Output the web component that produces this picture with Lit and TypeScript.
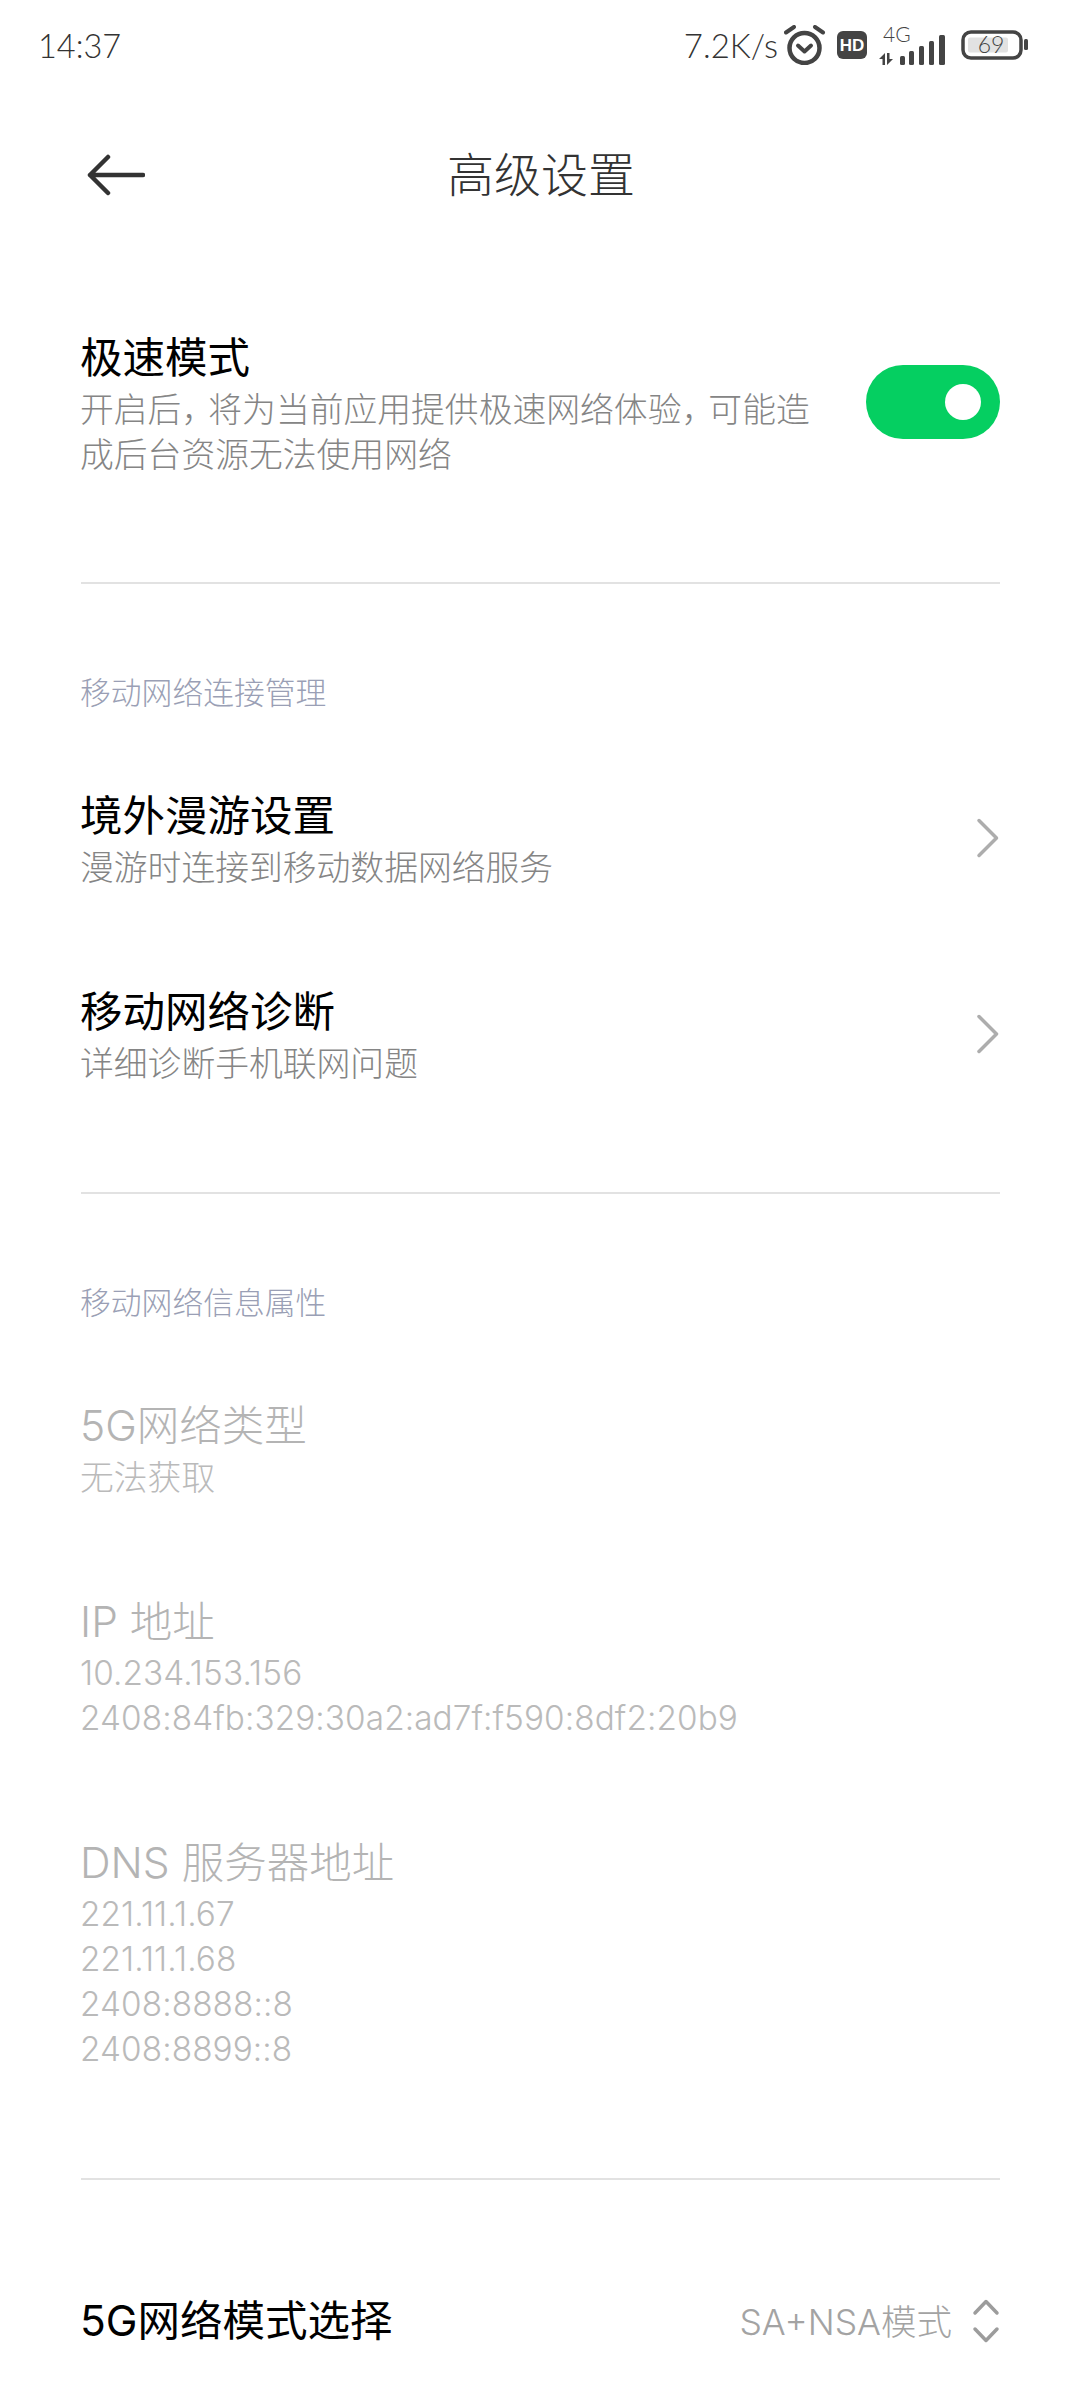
import { LitElement, html, css } from "lit";
import { customElement } from "lit/decorators.js";

const chevron = html`<svg class="chev" width="24" height="40" viewBox="0 0 24 40"><path d="M3 2.500L20.500 20L3 37.500" fill="none" stroke="#adadad" stroke-width="3.500" stroke-linecap="round" stroke-linejoin="round"/></svg>`;

@customElement("app-root")
export class AppRoot extends LitElement {
  static styles = css`
    :host {
      display: block;
      width: 1080px;
      height: 2400px;
      background: #fff;
      overflow: hidden;
      font-family: "Inter", "Noto Sans CJK SC", sans-serif;
      font-weight: 300;
      color: #000;
    }
    .status {
      height: 90px;
      display: flex;
      align-items: center;
      padding: 0 51px 0 38px;
      color: #333;
      font-size: 33px;
      font-family: "Lato", sans-serif;
    }
    .time { margin-right: auto; font-size: 32.500px; }
    .speed { margin-right: 6px; }
    .icons { display: flex; align-items: center; }
    .icons svg { display: block; }
    .gap-hd { margin-left: 11px; }
    .gap-sig { margin-left: 12px; }
    .gap-bat { margin-left: 14px; }
    .header {
      height: 170px;
      display: grid;
      grid-template-columns: 1fr auto 1fr;
      align-items: center;
      padding: 0 81px 0 87px;
    }
    .title {
      font-size: 47px;
      color: #333;
      line-height: 60px;
      font-family: "Noto Sans CJK SC", sans-serif;
      margin-top: -6px;
      margin-left: -4px;
    }
    .section { padding: 0 80px; }
    .hr { height: 2px; background: #e2e2e2; margin: 45px 80px 0 81px; }
    .hr.wide { margin-top: 60px; }
    .label {
      font-size: 30.800px;
      line-height: 45px;
      color: #9a9fb5;
      padding-top: 84px;
      padding-bottom: 27px;
      font-family: "Noto Sans CJK SC", sans-serif;
    }
    .row {
      display: flex;
      align-items: center;
      justify-content: space-between;
      padding: 46px 0;
    }
    .row .txt { flex: 1; min-width: 0; }
    .name { font-size: 42.500px; line-height: 59px; color: #000; font-weight: 400; }
    .sub { font-size: 33.800px; line-height: 45px; color: #858585; }
    .num { font-size: 33.300px; letter-spacing: 0.1px; }
    .dis .name { color: #b4b4b4; font-weight: 300; }
    .dis .sub { color: #bababa; }
    .first { padding-top: 68px; padding-bottom: 60px; }
    .first .sub { max-width: 745px; }
    .comma { font-feature-settings: "halt"; padding-right: 10px; }
    .toggle {
      width: 134px;
      height: 74px;
      border-radius: 37px;
      background: #05cf61;
      display: flex;
      align-items: center;
      justify-content: flex-end;
      padding-right: 19px;
      box-sizing: border-box;
      margin-top: -2px;
    }
    .knob { width: 36px; height: 36px; border-radius: 50%; background: #fff; }
    .chev { display: block; }
    .last { padding-top: 111px; }
    .right { display: flex; align-items: center; gap: 20px; font-size: 35.500px; color: #a3a3a3; }
    .right span { position: relative; top: -1px; }
  `;

  row(name: string, subs: string[], trailing: unknown = "", num = false) {
    return html`<div class="row">
      <div class="txt">
        <div class="name">${name}</div>
        ${subs.map((s) => html`<div class="sub ${num ? "num" : ""}">${s}</div>`)}
      </div>
      ${trailing}
    </div>`;
  }

  render() {
    return html`
      <div class="status">
        <div class="time">14:37</div>
        <div class="speed">7.2K/s</div>
        <div class="icons">
          <svg width="42" height="40" viewBox="0 0 42 40">
            <circle cx="20.500" cy="23" r="15" fill="none" stroke="#444" stroke-width="4.500"/>
            <path d="M14 20.500L20.500 26.500L27 20.500" fill="none" stroke="#444" stroke-width="4" stroke-linecap="round" stroke-linejoin="round"/>
            <path d="M2 7.500L10 2M39 7.500L31 2" fill="none" stroke="#444" stroke-width="4" stroke-linecap="round"/>
          </svg>
          <svg class="gap-hd" width="30" height="30" viewBox="0 0 30 30">
            <rect x="0" y="1" width="30" height="28" rx="6" fill="#444"/>
            <text x="15" y="21" font-size="17" font-weight="700" font-family="Liberation Sans" fill="#fff" text-anchor="middle">HD</text>
          </svg>
          <svg class="gap-sig" width="68" height="40" viewBox="0 0 68 40">
            <text x="4" y="17" font-size="21" font-family="Lato" fill="#444">4G</text>
            <g fill="#444">
              <rect x="21" y="31" width="5" height="9" rx="1.500"/>
              <rect x="30" y="26" width="5" height="14" rx="1.500"/>
              <rect x="40" y="21" width="5" height="19" rx="1.500"/>
              <rect x="50" y="16" width="5" height="24" rx="1.500"/>
              <rect x="60" y="10" width="6" height="30" rx="1.500"/>
              <path d="M0 34L6 28V40H3.500V34ZM8 28H10.500V34H14L8 40Z"/>
            </g>
          </svg>
          <svg class="gap-bat" width="68" height="30" viewBox="0 0 68 30">
            <rect x="2" y="2" width="58" height="26" rx="8" fill="none" stroke="#444" stroke-width="3.500"/>
            <rect x="7" y="7.500" width="40" height="15" rx="2" fill="#e2e2e2"/>
            <text x="30" y="23" font-size="23" font-family="Lato" font-weight="300" fill="#444" text-anchor="middle">69</text>
            <rect x="63" y="9" width="4" height="11" rx="1.500" fill="#444"/>
          </svg>
        </div>
      </div>

      <div class="header">
        <svg width="58" height="42" viewBox="0 0 58 42"><path d="M56 21H3M21 3L3 21L21 39" fill="none" stroke="#333" stroke-width="4.500" stroke-linecap="round" stroke-linejoin="round"/></svg>
        <div class="title">高级设置</div>
        <div></div>
      </div>

      <div class="section">
        <div class="row first">
          <div class="txt">
            <div class="name">极速模式</div>
            <div class="sub">开启后<span class="comma">，</span>将为当前应用提供极速网络体验<span class="comma">，</span>可能造成后台资源无法使用网络</div>
          </div>
          <div class="toggle"><div class="knob"></div></div>
        </div>
      </div>
      <div class="hr"></div>

      <div class="section">
        <div class="label">移动网络连接管理</div>
        ${this.row("境外漫游设置", ["漫游时连接到移动数据网络服务"], chevron)}
        ${this.row("移动网络诊断", ["详细诊断手机联网问题"], chevron)}
      </div>
      <div class="hr wide"></div>

      <div class="section dis">
        <div class="label">移动网络信息属性</div>
        ${this.row("5G网络类型", ["无法获取"])}
        ${this.row("IP 地址", ["10.234.153.156", "2408:84fb:329:30a2:ad7f:f590:8df2:20b9"], "", true)}
        ${this.row("DNS 服务器地址", ["221.11.1.67", "221.11.1.68", "2408:8888::8", "2408:8899::8"], "", true)}
      </div>
      <div class="hr wide"></div>

      <div class="section">
        <div class="row last">
          <div class="name">5G网络模式选择</div>
          <div class="right"><span>SA+NSA模式</span>
            <svg width="28" height="44" viewBox="0 0 28 44"><path d="M3 14L14 2.500L25 14M3 30L14 41.500L25 30" fill="none" stroke="#9c9c9c" stroke-width="3.500" stroke-linecap="round" stroke-linejoin="round"/></svg>
          </div>
        </div>
      </div>
    `;
  }
}
